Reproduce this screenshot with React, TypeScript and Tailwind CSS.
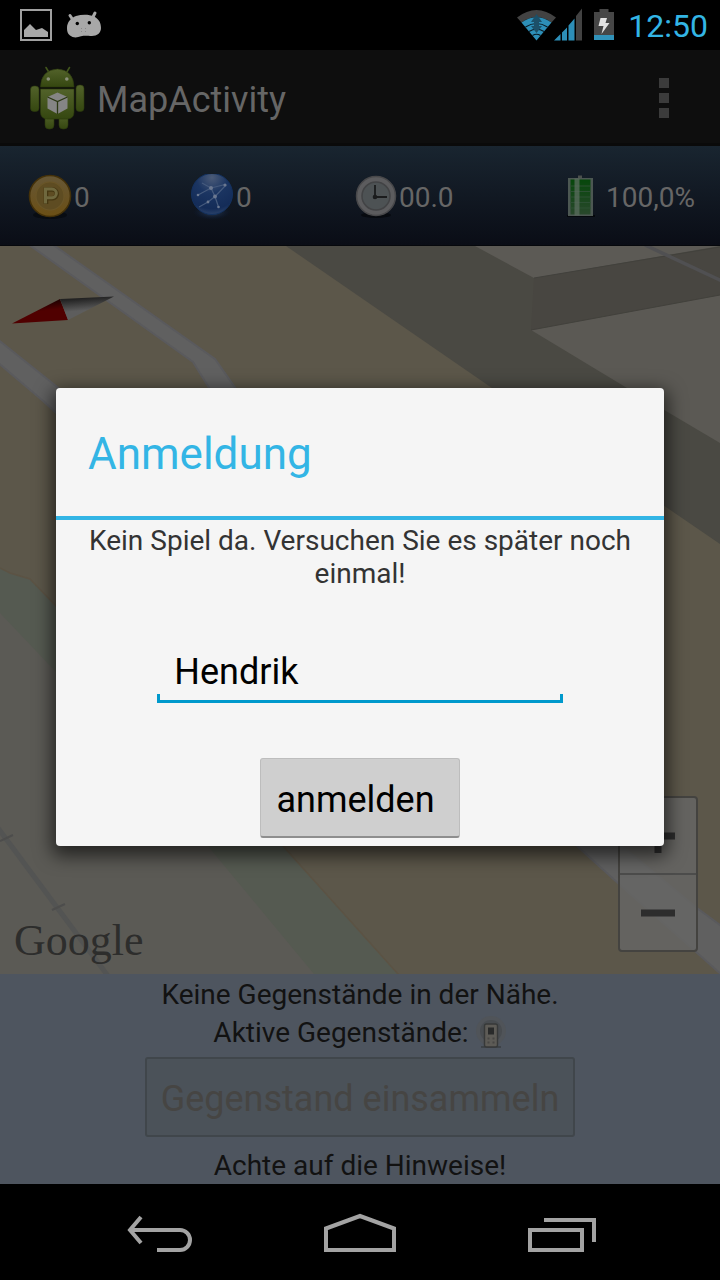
import React, { useState } from "react";

function StatusBar() {
  return (
    <div className="flex h-[50px] shrink-0 items-center justify-between bg-black pl-[19px] pr-3">
      <div className="flex items-center gap-3">
        <svg width="34" height="34" viewBox="19 8 34 34" role="img" aria-label="Screenshot">
          <rect x="21" y="10" width="30" height="30" fill="none" stroke="#a0a0a0" strokeWidth="2" />
          <path d="M24 37v-7l6-6 6 6 6-2 6 4v5z" fill="#a8a8a8" />
        </svg>
        <svg width="38" height="30" viewBox="65 10 38 30" role="img" aria-label="System">
          <path
            d="M70 15.500L73 20M95 13L92.500 18"
            stroke="#a8a8a8"
            strokeWidth="3"
            strokeLinecap="round"
          />
          <path
            d="M67 28C67 22 71 18 76 16C82 14.300 89 14.300 94 16.500C99 19 101 23 101 28C101 33 97 36 92 36C87 36 85 35.500 81 36.300C77 37.800 73 38 70 35.500C67.500 33.500 67 31 67 28z"
            fill="#a8a8a8"
          />
          <circle cx="77.300" cy="23.500" r="1.700" fill="#000" />
          <circle cx="89.300" cy="22.700" r="1.700" fill="#000" />
          <path d="M81 28.500h1M85 28.500h1M81 31.500h1M85 31.500h1" stroke="#888" strokeWidth="1" />
        </svg>
      </div>
      <div className="flex items-center gap-3">
        <svg width="65" height="34" viewBox="517 8 65 34" role="img" aria-label="WLAN und Mobilfunk">
          <path d="M517 17.500Q536.500 2.500 556 17.500L551.500 22.500Q536.500 11.500 521.500 22.500z" fill="#424242" />
          <path d="M521.500 22.500Q536.500 12 551.500 22.500L536.500 40.500z" fill="#2d8fb8" />
          <path
            d="M525.500 27Q536.500 20 547.500 27M529 31.500Q536.500 27 544 31.500M532.500 35.500Q536.500 33 540.500 35.500"
            fill="none"
            stroke="#0a1a22"
            strokeWidth="1.200"
          />
          <path d="M536.500 14l5.500 8h-3v4h3l-5.500 7-5.500-7h3v-4h-3z" fill="#1c5068" />
          <path d="M554 40.500L560.500 34v6.500zM562 32.500l5-5v13h-5zM568.500 25.500l6-7v22h-6z" fill="#2d8fb8" />
          <path d="M576 16l6-7.500v32h-6z" fill="#424242" />
        </svg>
        <svg width="20" height="32" viewBox="594 9 20 32" role="img" aria-label="Akku wird geladen">
          <path d="M594 12h5.500V9h9v3h5.500v28h-20z" fill="#464646" />
          <path d="M594 35h20v5h-20z" fill="#3192b9" />
          <path d="M600.500 18h6.500l-1.500 5h4L601.500 34l2-8h-5z" fill="#e3e3e3" />
        </svg>
        <time className="ml-0.5 pt-0.5 text-[32px] leading-[38px] text-[#33b5e5]">12:50</time>
      </div>
    </div>
  );
}

function AndroidIcon() {
  return (
    <svg width="56" height="64" viewBox="29 66 56 64" aria-hidden="true">
      <defs>
        <linearGradient id="robot" x1="0" y1="0" x2="0" y2="1">
          <stop offset="0" stopColor="#52622a" />
          <stop offset="1" stopColor="#354710" />
        </linearGradient>
      </defs>
      <path d="M46 67.500l3 5M69.500 67.500l-3 5" stroke="#42561c" strokeWidth="1.600" strokeLinecap="round" />
      <g fill="url(#robot)" stroke="#2c3b0d" strokeWidth="0.600">
        <rect x="45" y="114" width="9" height="15" rx="4" />
        <rect x="59" y="114" width="9" height="15" rx="4" />
        <rect x="30.500" y="86" width="8.500" height="25.500" rx="3.500" />
        <rect x="76" y="85" width="8" height="26.500" rx="3.500" />
        <path d="M40.500 87Q41 70 57.500 69Q73.500 70 74 87z" />
        <path d="M40.500 89h33.500v23q0 7-7 7h-19.500q-7 0-7-7z" />
      </g>
      <path d="M40.500 88H74" stroke="#151b08" strokeWidth="1.200" />
      <circle cx="48.300" cy="79" r="1.800" fill="#8a8f7a" />
      <circle cx="66.800" cy="79" r="1.800" fill="#8a8f7a" />
      <path d="M57.500 92.500L67.500 97v11.500L57.500 114l-10-5.500V97z" fill="#858585" />
      <path d="M47.500 97l10 4.500 10-4.500M57.500 101.500V114" fill="none" stroke="#2b3713" strokeWidth="1.300" />
    </svg>
  );
}

function ActionBar() {
  return (
    <header className="flex h-24 shrink-0 items-center border-b-[3px] border-[#0a0a0a] bg-[#0e0e0e] pl-[29px] pr-[41px] pt-0.5">
      <AndroidIcon />
      <h1 className="ml-3 flex-1 pt-1 text-4xl font-normal leading-[42px] text-[#666]">MapActivity</h1>
      <button type="button" aria-label="Weitere Optionen" className="flex flex-col gap-[5px] p-2.5">
        <span className="size-2.5 bg-[#3b3b3b]" />
        <span className="size-2.5 bg-[#3b3b3b]" />
        <span className="size-2.5 bg-[#3b3b3b]" />
      </button>
    </header>
  );
}

function CoinIcon() {
  return (
    <svg width="46" height="46" viewBox="0 0 46 46" aria-hidden="true">
      <defs>
        <linearGradient id="coin" x1="0" y1="0" x2="0" y2="1">
          <stop offset="0" stopColor="#665736" />
          <stop offset="1" stopColor="#6b4f15" />
        </linearGradient>
      </defs>
      <ellipse cx="22" cy="41" rx="17" ry="4" fill="#080c12" />
      <circle cx="22" cy="22" r="20.500" fill="url(#coin)" stroke="#443109" strokeWidth="1.600" />
      <circle cx="22" cy="22" r="14" fill="#5e4c22" stroke="#6a5628" strokeWidth="1.200" />
      <path d="M18 30V15.500h6.500a4.300 4.300 0 0 1 0 8.700H18" fill="none" stroke="#453712" strokeWidth="4.600" />
      <path d="M17.500 29.500V15h6.500a4.300 4.300 0 0 1 0 8.700h-6.500" fill="none" stroke="#6f683e" strokeWidth="3" />
    </svg>
  );
}

function GlobeIcon() {
  return (
    <svg width="46" height="46" viewBox="0 0 46 46" aria-hidden="true">
      <defs>
        <radialGradient id="globe" cx="0.5" cy="0.1" r="0.95">
          <stop offset="0" stopColor="#4b5b78" />
          <stop offset="0.4" stopColor="#1b3562" />
          <stop offset="0.8" stopColor="#142c58" />
          <stop offset="1" stopColor="#334a70" />
        </radialGradient>
        <radialGradient id="glow">
          <stop offset="0" stopColor="#35465f" />
          <stop offset="1" stopColor="#081a3a" stopOpacity="0" />
        </radialGradient>
      </defs>
      <ellipse cx="22" cy="38" rx="19" ry="8" fill="url(#glow)" />
      <circle cx="22" cy="20" r="20.500" fill="url(#globe)" stroke="#13315f" strokeWidth="1" />
      <path
        d="M8 21L21 14L35 10.500M21 14L25 22.500L18 28L9 33M25 22.500L36 11M25 22.500L28.500 33M12 9L21 14"
        fill="none"
        stroke="#455a7d"
        strokeWidth="1.200"
      />
      <g fill="#6b7890">
        <circle cx="8" cy="21" r="1.300" />
        <circle cx="21" cy="14" r="2" />
        <circle cx="35" cy="11" r="1.600" />
        <circle cx="25" cy="22.500" r="1.900" />
        <circle cx="18" cy="28" r="1.400" />
        <circle cx="28.500" cy="33" r="1.300" />
      </g>
    </svg>
  );
}

function ClockIcon() {
  return (
    <svg width="44" height="46" viewBox="0 0 44 46" aria-hidden="true">
      <ellipse cx="21" cy="41" rx="15" ry="3" fill="#070a0f" />
      <circle cx="21" cy="22" r="19.500" fill="#5c5c5e" stroke="#48484a" strokeWidth="1.500" />
      <circle cx="21" cy="22" r="14" fill="#4d5254" stroke="#424345" strokeWidth="1.500" />
      <path d="M20 25V11M18 23h14" stroke="#1b1c1d" strokeWidth="1.800" />
      <circle cx="20" cy="23" r="2.300" fill="#1b1c1d" />
    </svg>
  );
}

function BatteryIcon() {
  return (
    <svg width="30" height="46" viewBox="0 0 30 46" aria-hidden="true">
      <defs>
        <linearGradient id="cell" x1="0" y1="0" x2="0" y2="1">
          <stop offset="0" stopColor="#06470b" />
          <stop offset="1" stopColor="#29482c" />
        </linearGradient>
      </defs>
      <path d="M1 42h28" stroke="#05080c" strokeWidth="2" />
      <rect x="12" y="1.500" width="4" height="4" fill="#4b504d" />
      <rect x="2" y="4" width="25" height="38" fill="#4c5752" />
      <rect x="4.500" y="5.500" width="20" height="35" fill="url(#cell)" />
      <path d="M4.500 12h20M4.500 17.500h20M4.500 23h20M4.500 28.500h20M4.500 34h20" stroke="#2c5033" strokeWidth="1" />
      <rect x="8.500" y="4.500" width="5" height="37" fill="#5b6c5f" opacity="0.75" />
    </svg>
  );
}

function Stat({ icon, value, gap }: { icon: React.ReactNode; value: string; gap?: boolean }) {
  return (
    <div className={gap ? "flex items-center gap-2.5" : "flex items-center"}>
      {icon}
      <span className="pt-0.5 text-[28px] leading-[33px] text-[#666]">{value}</span>
    </div>
  );
}

function StatsBar() {
  return (
    <div className="grid h-[100px] shrink-0 grid-cols-[162fr_165fr_211fr_129fr] items-center border-b border-[#06080c] bg-linear-to-b from-[#192530] to-[#0a0d16] pl-7 pr-[25px] pt-0.5">
      <Stat icon={<CoinIcon />} value="0" />
      <Stat icon={<GlobeIcon />} value="0" />
      <Stat icon={<ClockIcon />} value="00.0" />
      <Stat icon={<BatteryIcon />} value="100,0%" gap />
    </div>
  );
}

function MapView() {
  return (
    <main className="relative min-h-[500px] flex-1 overflow-hidden bg-[#5c574a]">
      <svg
        className="absolute inset-0 size-full"
        viewBox="0 246 720 728"
        preserveAspectRatio="xMidYMid slice"
        role="img"
        aria-label="Karte"
      >
        <defs>
          <linearGradient id="needleRed" x1="0" y1="0" x2="0.3" y2="1">
            <stop offset="0.3" stopColor="#240000" />
            <stop offset="0.6" stopColor="#500000" />
          </linearGradient>
          <linearGradient id="needleGrey" x1="0.3" y1="0" x2="0.5" y2="1">
            <stop offset="0.1" stopColor="#222" />
            <stop offset="0.6" stopColor="#5d5d5d" />
          </linearGradient>
        </defs>
        <rect y="246" width="720" height="728" fill="#5c574a" />
        <g fill="#606060" stroke="#5a5a5d" strokeWidth="2">
          <path d="M28 244L193 362L260 470L300 480L215 359L52 244z" />
          <path d="M-4 338L56 386L130 450V480L42 400L-4 361z" />
          <path d="M577 846L620 885L695 951L724 977V928L697 908L622 846L540 780z" />
        </g>
        <path d="M286 246H720V544L492 388z" fill="#4a4943" />
        <path d="M534 278L720 247V295L531 330z" fill="#484641" />
        <path d="M475 246H720L534 278z" fill="#5c5a55" />
        <path d="M531 330L720 295V443L627 388z" fill="#5b5954" />
        <path d="M534 278L720 247M531 330L720 295" stroke="#42413c" strokeWidth="1" />
        <path d="M645 245L722 281" stroke="#505052" strokeWidth="3.500" />
        <path
          d="M-2 567L10 573L30 579L56 606L283 846L398 974V980H-2z"
          fill="#555a51"
          stroke="#5c5344"
          strokeWidth="1.500"
        />
        <path d="M-2 611L56 672L208 846L314 974V980H-2z" fill="#5b5a55" />
        <path d="M-2 828L108 976" stroke="#535453" strokeWidth="5" />
        <path d="M0 841L13 835M52 910L65 904" stroke="#4d4d4c" strokeWidth="2" />
        <path d="M12 323.500L60 299L68 320z" fill="url(#needleRed)" />
        <path d="M60 299L114 296.500L68 320z" fill="url(#needleGrey)" />
      </svg>
      <span className="absolute bottom-2 left-3.5 font-['Liberation_Serif',serif] text-[44px] leading-[50px] text-[#2d2d2c]">
        Google
      </span>
      <div className="absolute bottom-[22px] right-[22px] flex h-[156px] w-20 flex-col rounded-[4px] border-2 border-[#444340] bg-[#676765]/80">
        <button type="button" aria-label="Vergrößern" className="flex flex-1 items-center justify-center border-b-2 border-[#4c4c4b]">
          <svg width="34" height="34" viewBox="0 0 34 34" aria-hidden="true">
            <path d="M0 17h34M17 0v34" stroke="#2d2d2d" strokeWidth="7" />
          </svg>
        </button>
        <button type="button" aria-label="Verkleinern" className="flex flex-1 items-center justify-center">
          <svg width="34" height="34" viewBox="0 0 34 34" aria-hidden="true">
            <path d="M0 17h34" stroke="#2d2d2d" strokeWidth="7" />
          </svg>
        </button>
      </div>
    </main>
  );
}

function PhoneIcon() {
  return (
    <svg width="32" height="34" viewBox="0 0 32 34" aria-hidden="true">
      <circle cx="16" cy="16" r="15" fill="#505459" />
      <circle cx="16" cy="16" r="11" fill="#484c50" />
      <path d="M6 32h20" stroke="#3e4348" strokeWidth="2" />
      <rect x="9.500" y="9" width="13" height="23" rx="2" fill="#5d5b56" stroke="#373939" strokeWidth="1.400" />
      <rect x="13" y="12.500" width="6" height="7" fill="#292a2a" />
      <path d="M12.500 23.500h2M17.500 23.500h2M12.500 27.500h2M17.500 27.500h2" stroke="#484744" strokeWidth="2" />
    </svg>
  );
}

function ItemPanel() {
  return (
    <section className="flex h-[210px] shrink-0 flex-col items-center bg-[#4e555f] pt-1 text-[28px] leading-[33px] text-[#121212]">
      <p>Keine Gegenstände in der Nähe.</p>
      <div className="mt-1 flex items-center gap-1.5">
        <p>Aktive Gegenstände:</p>
        <PhoneIcon />
      </div>
      <button
        type="button"
        disabled
        className="mt-2 h-20 rounded-[3px] border-2 border-[#40464b] bg-[#4b5259] px-3.5 pt-1 text-4xl text-[#464543]"
      >
        Gegenstand einsammeln
      </button>
      <p className="mt-3">Achte auf die Hinweise!</p>
    </section>
  );
}

function LoginDialog() {
  const [name, setName] = useState("Hendrik");
  return (
    <div className="absolute inset-0 flex items-center justify-center px-14">
      <form
        role="dialog"
        aria-labelledby="login-title"
        onSubmit={(e) => e.preventDefault()}
        className="flex w-full max-w-[608px] flex-col items-center rounded-[4px] bg-[#f5f5f5] pb-2 shadow-[0_6px_18px_4px_rgba(0,0,0,0.6)]"
      >
        <h2
          id="login-title"
          className="flex h-[132px] w-full items-center border-b-4 border-[#33b5e5] px-8 pt-1 text-[44px] font-normal leading-[52px] text-[#33b5e5]"
        >
          Anmeldung
        </h2>
        <p className="mt-1 px-5 text-center text-[28px] leading-[33px] text-[#333]">
          Kein Spiel da. Versuchen Sie es später noch einmal!
        </p>
        <div className="mt-14 w-2/3 max-w-[406px]">
          <input
            type="text"
            aria-label="Name"
            value={name}
            onChange={(e) => setName(e.target.value)}
            className="block h-12 w-full bg-transparent px-[17px] pt-1 text-4xl text-black outline-none"
          />
          <div className="h-[9px] border-x-[3px] border-b-[3px] border-[#0099cc]" />
        </div>
        <button
          type="submit"
          className="mt-[55px] h-20 rounded-[3px] border border-b-2 border-[#bdbdbd] border-b-[#8e8e8e] bg-[#cfcfcf] pl-[15px] pr-6 pt-1 text-4xl text-black"
        >
          anmelden
        </button>
      </form>
    </div>
  );
}

function NavigationBar() {
  return (
    <nav className="flex h-24 shrink-0 items-center justify-center bg-black pt-1">
      <button type="button" aria-label="Zurück" className="flex w-[200px] justify-center">
        <svg width="70" height="44" viewBox="125 1212 70 44" fill="none" stroke="#a3a3a3" strokeWidth="4">
          <path d="M141 1217L130 1230L141 1243M129 1230H180A10 10 0 0 1 180 1250H157" />
        </svg>
      </button>
      <button type="button" aria-label="Startseite" className="flex w-[200px] justify-center">
        <svg width="76" height="44" viewBox="322 1212 76 44" fill="none" stroke="#a3a3a3" strokeWidth="4">
          <path d="M326 1228.500L360 1216L394 1228.500V1250H326z" />
        </svg>
      </button>
      <button type="button" aria-label="Letzte Apps" className="flex w-[200px] justify-center">
        <svg width="72" height="44" viewBox="522 1212 72 44" fill="none" stroke="#a3a3a3" strokeWidth="4">
          <path d="M528 1230H580V1250H528zM542 1220H592V1242" />
        </svg>
      </button>
    </nav>
  );
}

export default function App() {
  return (
    <div className="flex min-h-screen flex-col bg-black font-[Roboto,sans-serif]">
      <StatusBar />
      <div className="relative flex flex-1 flex-col">
        <ActionBar />
        <StatsBar />
        <MapView />
        <ItemPanel />
        <LoginDialog />
      </div>
      <NavigationBar />
    </div>
  );
}
